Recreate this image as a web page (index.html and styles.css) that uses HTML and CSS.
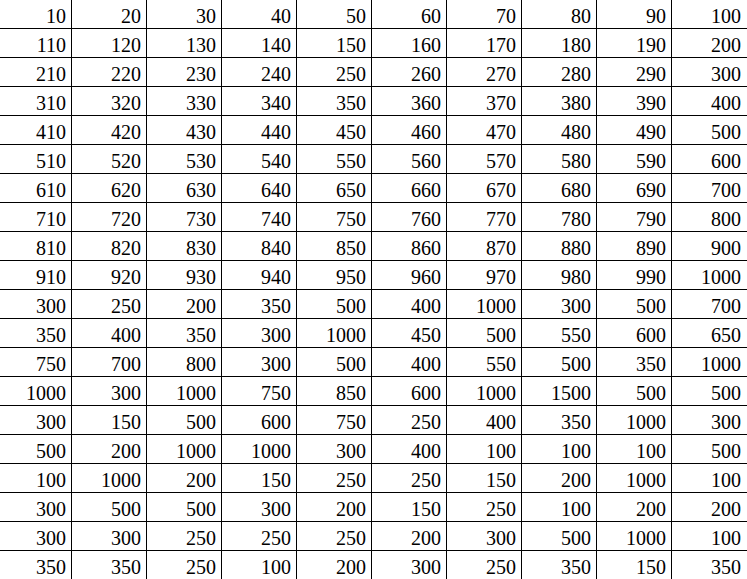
FILE: index.html
```html
<!DOCTYPE html>
<html>
<head>
<meta charset="utf-8">
<link rel="stylesheet" href="styles.css">
</head>
<body>
<div class="sheet">
<div class="c">10</div><div class="c">20</div><div class="c">30</div><div class="c">40</div><div class="c">50</div><div class="c">60</div><div class="c">70</div><div class="c">80</div><div class="c">90</div><div class="c">100</div>
<div class="c">110</div><div class="c">120</div><div class="c">130</div><div class="c">140</div><div class="c">150</div><div class="c">160</div><div class="c">170</div><div class="c">180</div><div class="c">190</div><div class="c">200</div>
<div class="c">210</div><div class="c">220</div><div class="c">230</div><div class="c">240</div><div class="c">250</div><div class="c">260</div><div class="c">270</div><div class="c">280</div><div class="c">290</div><div class="c">300</div>
<div class="c">310</div><div class="c">320</div><div class="c">330</div><div class="c">340</div><div class="c">350</div><div class="c">360</div><div class="c">370</div><div class="c">380</div><div class="c">390</div><div class="c">400</div>
<div class="c">410</div><div class="c">420</div><div class="c">430</div><div class="c">440</div><div class="c">450</div><div class="c">460</div><div class="c">470</div><div class="c">480</div><div class="c">490</div><div class="c">500</div>
<div class="c">510</div><div class="c">520</div><div class="c">530</div><div class="c">540</div><div class="c">550</div><div class="c">560</div><div class="c">570</div><div class="c">580</div><div class="c">590</div><div class="c">600</div>
<div class="c">610</div><div class="c">620</div><div class="c">630</div><div class="c">640</div><div class="c">650</div><div class="c">660</div><div class="c">670</div><div class="c">680</div><div class="c">690</div><div class="c">700</div>
<div class="c">710</div><div class="c">720</div><div class="c">730</div><div class="c">740</div><div class="c">750</div><div class="c">760</div><div class="c">770</div><div class="c">780</div><div class="c">790</div><div class="c">800</div>
<div class="c">810</div><div class="c">820</div><div class="c">830</div><div class="c">840</div><div class="c">850</div><div class="c">860</div><div class="c">870</div><div class="c">880</div><div class="c">890</div><div class="c">900</div>
<div class="c">910</div><div class="c">920</div><div class="c">930</div><div class="c">940</div><div class="c">950</div><div class="c">960</div><div class="c">970</div><div class="c">980</div><div class="c">990</div><div class="c">1000</div>
<div class="c">300</div><div class="c">250</div><div class="c">200</div><div class="c">350</div><div class="c">500</div><div class="c">400</div><div class="c">1000</div><div class="c">300</div><div class="c">500</div><div class="c">700</div>
<div class="c">350</div><div class="c">400</div><div class="c">350</div><div class="c">300</div><div class="c">1000</div><div class="c">450</div><div class="c">500</div><div class="c">550</div><div class="c">600</div><div class="c">650</div>
<div class="c">750</div><div class="c">700</div><div class="c">800</div><div class="c">300</div><div class="c">500</div><div class="c">400</div><div class="c">550</div><div class="c">500</div><div class="c">350</div><div class="c">1000</div>
<div class="c">1000</div><div class="c">300</div><div class="c">1000</div><div class="c">750</div><div class="c">850</div><div class="c">600</div><div class="c">1000</div><div class="c">1500</div><div class="c">500</div><div class="c">500</div>
<div class="c">300</div><div class="c">150</div><div class="c">500</div><div class="c">600</div><div class="c">750</div><div class="c">250</div><div class="c">400</div><div class="c">350</div><div class="c">1000</div><div class="c">300</div>
<div class="c">500</div><div class="c">200</div><div class="c">1000</div><div class="c">1000</div><div class="c">300</div><div class="c">400</div><div class="c">100</div><div class="c">100</div><div class="c">100</div><div class="c">500</div>
<div class="c">100</div><div class="c">1000</div><div class="c">200</div><div class="c">150</div><div class="c">250</div><div class="c">250</div><div class="c">150</div><div class="c">200</div><div class="c">1000</div><div class="c">100</div>
<div class="c">300</div><div class="c">500</div><div class="c">500</div><div class="c">300</div><div class="c">200</div><div class="c">150</div><div class="c">250</div><div class="c">100</div><div class="c">200</div><div class="c">200</div>
<div class="c">300</div><div class="c">300</div><div class="c">250</div><div class="c">250</div><div class="c">250</div><div class="c">200</div><div class="c">300</div><div class="c">500</div><div class="c">1000</div><div class="c">100</div>
<div class="c">350</div><div class="c">350</div><div class="c">250</div><div class="c">100</div><div class="c">200</div><div class="c">300</div><div class="c">250</div><div class="c">350</div><div class="c">150</div><div class="c">350</div>
</div>
</body>
</html>
```

FILE: styles.css
```css
html, body {
  margin: 0;
  padding: 0;
  background: #ffffff;
  overflow: hidden;
}
.sheet {
  width: 747px;
  height: 579px;
  overflow: hidden;
  display: grid;
  grid-template-columns: 72px repeat(9, 75px);
  grid-template-rows: repeat(20, 29px);
  font-family: "Liberation Serif", "Times New Roman", serif;
  font-size: 20px;
  color: #000;
}
.c {
  box-sizing: border-box;
  border-right: 1px solid #000;
  border-bottom: 1px solid #000;
  display: flex;
  align-items: flex-end;
  justify-content: flex-end;
  padding: 0 5px 2px 0;
  line-height: 20px;
}
.c:nth-child(10n) {
  border-right: none;
  padding-right: 6px;
}
```
